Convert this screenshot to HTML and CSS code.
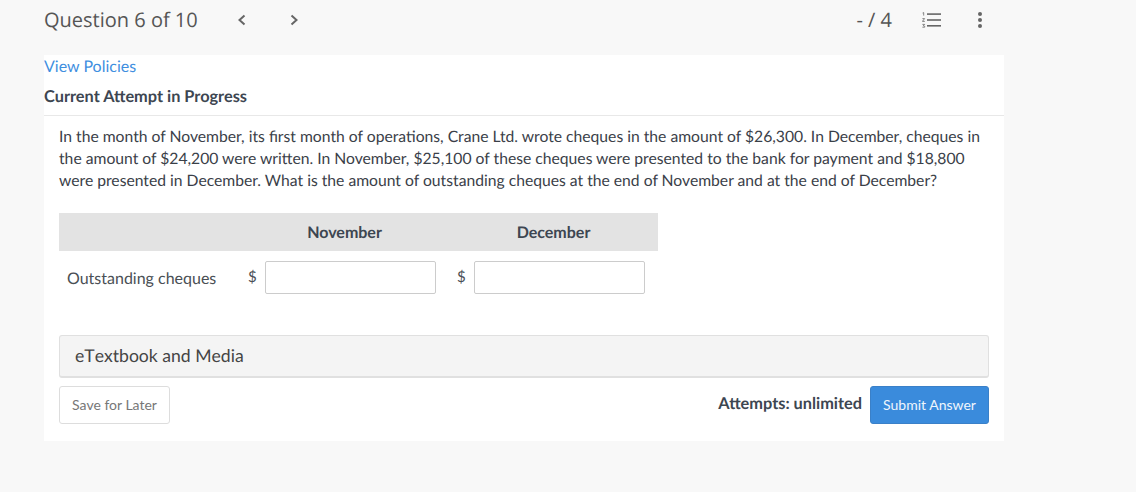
FILE: index.html
```html
<!DOCTYPE html>
<html lang="en">
<head>
<meta charset="utf-8">
<title>Question 6 of 10</title>
<link rel="stylesheet" href="styles.css">
</head>
<body>
<header class="topbar">
  <div class="q-title">Question 6 of 10</div>
  <svg class="chev chev-l" width="12" height="14" viewBox="0 0 12 14"><path d="M8.500 2.500 3.500 7l5 4.500" fill="none" stroke="#666" stroke-width="2"/></svg>
  <svg class="chev chev-r" width="12" height="14" viewBox="0 0 12 14"><path d="M3.500 2.500 8.500 7l-5 4.500" fill="none" stroke="#666" stroke-width="2"/></svg>
  <div class="score">- / 4</div>
  <svg class="list-ic" width="20" height="16" viewBox="0 0 20 16"><g fill="#666"><rect x="5" y="1.300" width="14" height="1.600"/><rect x="5" y="7.200" width="14" height="1.600"/><rect x="5" y="13" width="14" height="1.600"/></g><g fill="none" stroke="#666" stroke-width=".8"><path d="M.6 1 1.700.6V3.600"/><path d="M.4 6.600H2.600L.4 9.400H2.800"/><path d="M.4 12.400H2.700L1.300 13.800C2.400 13.700 2.900 14.200 2.700 15.200H.4"/></g></svg>
  <svg class="dots" width="6" height="18" viewBox="0 0 6 18"><g fill="#666"><circle cx="3" cy="3" r="2"/><circle cx="3" cy="9" r="2"/><circle cx="3" cy="15" r="2"/></g></svg>
</header>
<main class="card">
  <a class="policies" href="#">View Policies</a>
  <h2 class="attempt">Current Attempt in Progress</h2>
  <div class="content">
    <p class="question">In the month of November, its first month of operations, Crane Ltd. wrote cheques in the amount of $26,300. In December, cheques in the amount of $24,200 were written. In November, $25,100 of these cheques were presented to the bank for payment and $18,800 were presented in December. What is the amount of outstanding cheques at the end of November and at the end of December?</p>
    <div class="answer-table">
      <div class="thead">
        <div class="th th-nov">November</div>
        <div class="th th-dec">December</div>
      </div>
      <div class="trow">
        <div class="row-label">Outstanding cheques</div>
        <span class="cur cur-1">$</span>
        <input class="field" type="text" aria-label="November">
        <span class="cur cur-2">$</span>
        <input class="field" type="text" aria-label="December">
      </div>
    </div>
    <div class="media">eTextbook and Media</div>
    <div class="actions">
      <button class="btn-save" type="button">Save for Later</button>
      <div class="right">
        <span class="attempts">Attempts: unlimited</span>
        <button class="btn-submit" type="button">Submit Answer</button>
      </div>
    </div>
  </div>
</main>
</body>
</html>
```
FILE: styles.css
```css
* { box-sizing: border-box; }
html, body { margin: 0; padding: 0; }
body {
  width: 1136px;
  height: 492px;
  overflow: hidden;
  background: #f8f8f8;
  font-family: Lato, "Liberation Sans", sans-serif;
  color: #3d4651;
  text-rendering: geometricPrecision;
}
.topbar {
  height: 55px;
  padding: 0 0 15px 44px;
  display: flex;
  align-items: center;
}
.q-title {
  font-family: "Open Sans", sans-serif;
  font-size: 20px;
  color: #555;
  width: 154px;
  margin-top: -2px;
  white-space: nowrap;
}
.chev-l { margin-left: 38px; }
.chev-r { margin-left: 40px; }
.score {
  font-family: "Open Sans", sans-serif;
  font-size: 20px;
  color: #555;
  margin-top: -2px;
  margin-left: auto;
}
.list-ic { margin-left: 30px; }
.dots { margin-left: 35px; margin-right: 153px; }
.card {
  width: 960px;
  height: 386px;
  margin-left: 44px;
  background: #fff;
  display: flex;
  flex-direction: column;
}
.policies {
  color: #3f8fdf;
  font-size: 16px;
  line-height: 18px;
  margin-top: 3px;
  text-decoration: none;
}
.attempt {
  margin: 11px 0 0;
  font-size: 16.330px;
  line-height: 20px;
  font-weight: 700;
  color: #3d4651;
  padding-bottom: 8px;
  border-bottom: 1px solid #e8e8e8;
}
.content { padding: 0 15px; }
.question {
  margin: 10px 0 0;
  font-size: 15.700px;
  line-height: 22px;
  color: #3a4048;
}
.answer-table { width: 599px; margin-top: 21px; }
.thead {
  height: 38px;
  background: #e3e3e3;
  display: flex;
  align-items: center;
  font-size: 16px;
  font-weight: 700;
  color: #3d4651;
}
.th { text-align: center; }
.th-nov { width: 209px; margin-left: 181px; }
.th-dec { width: 209px; }
.trow {
  display: flex;
  align-items: center;
  margin-top: 10px;
  height: 33px;
  font-size: 15px;
  color: #4a4f55;
}
.row-label { width: 189px; padding-left: 8px; margin-top: 2px; font-size: 16px; white-space: nowrap; }
.cur { width: 17px; margin-top: -2px; }
.cur-2 { margin-left: 21px; }
.field {
  width: 171px;
  height: 33px;
  border: 1px solid #ccc;
  border-radius: 2px;
  background: #fff;
}
.media {
  margin-top: 41px;
  width: 930px;
  height: 43px;
  background: #f4f4f4;
  border: 1px solid #e0e0e0;
  border-bottom-width: 2px;
  border-radius: 3px;
  padding-left: 15px;
  font-size: 17.600px;
  font-kerning: none;
  line-height: 40px;
  color: #444;
}
.actions {
  width: 930px;
  margin-top: 8px;
  display: flex;
  justify-content: space-between;
}
.btn-save {
  width: 111px;
  height: 38px;
  padding: 0 0 2px;
  background: #fff;
  border: 1px solid #ddd;
  border-radius: 3px;
  font: 14px Lato, sans-serif;
  color: #777;
}
.right { display: flex; align-items: center; gap: 8px; }
.attempts { font-size: 16.330px; font-weight: 700; color: #3d4651; margin-top: -4px; }
.btn-submit {
  width: 119px;
  height: 38px;
  padding: 0 0 2px;
  background: #3a8bdc;
  border: 1px solid #3a80c8;
  border-radius: 3px;
  font: 14px Lato, sans-serif;
  color: #f0f6fc;
}
```
